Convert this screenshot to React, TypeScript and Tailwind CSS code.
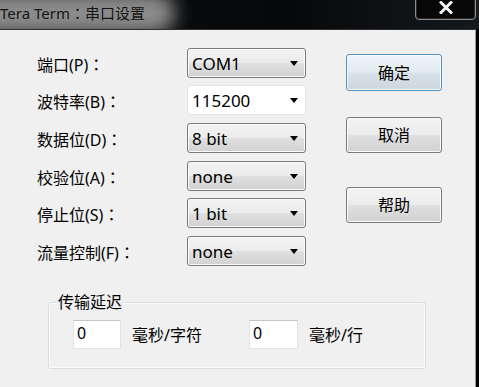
import React from "react";

function Arrow() {
  return (
    <svg width="8" height="5" viewBox="0 0 8 5" className="shrink-0">
      <polygon points="0,0 8,0 4,5" fill="#000" />
    </svg>
  );
}

function Colon() {
  return <span className="font-['Noto_Sans_CJK_TC',sans-serif]">：</span>;
}

function Combo({ value, white = false }: { value: string; white?: boolean }) {
  return (
    <div
      className={
        white
          ? "w-[119px] h-[30px] flex items-center justify-between pl-[4px] pr-[7px] bg-white border border-[#e6e6e6] rounded-[2px]"
          : "w-[119px] h-[30px] flex items-center justify-between pl-[4px] pr-[7px] border border-[#7a7a7a] rounded-[3px] shadow-[inset_0_0_0_1px_#fbfbfb] bg-[linear-gradient(#f3f3f3_0%,#ececec_48%,#dfdfdf_52%,#d2d2d2_100%)]"
      }
    >
      <span className="text-[17px] leading-none text-black">{value}</span>
      <Arrow />
    </div>
  );
}

function Btn({ label, primary = false, h }: { label: string; primary?: boolean; h: string }) {
  return (
    <div
      className={
        (primary
          ? "border-[#4f93c3] bg-[linear-gradient(#edf3f7_0%,#e4ecf1_48%,#d7e1e7_52%,#ccd7de_100%)] "
          : "border-[#7a7a7a] bg-[linear-gradient(#f3f3f3_0%,#ececec_48%,#dfdfdf_52%,#d2d2d2_100%)] ") +
        "w-[96px] flex items-center justify-center border rounded-[3px] shadow-[inset_0_0_0_1px_#fbfbfb] text-[16px] text-black " +
        h
      }
    >
      {label}
    </div>
  );
}

const rows: { label: string; value: string; white?: boolean; mt: string }[] = [
  { label: "端口(P)", value: "COM1", mt: "mt-0" },
  { label: "波特率(B)", value: "115200", white: true, mt: "mt-[7px]" },
  { label: "数据位(D)", value: "8 bit", mt: "mt-[8px]" },
  { label: "校验位(A)", value: "none", mt: "mt-[8px]" },
  { label: "停止位(S)", value: "1 bit", mt: "mt-[7px]" },
  { label: "流量控制(F)", value: "none", mt: "mt-[8px]" },
];

export default function App() {
  return (
    <div className="w-[479px] h-[387px] bg-black overflow-hidden font-['Noto_Sans','Noto_Sans_CJK_SC',sans-serif]">
      {/* title bar */}
      <div className="relative h-[29px] bg-[linear-gradient(90deg,#0d0f11,#07080a_60%,#15191c)] overflow-hidden">
        <div className="absolute left-[-30px] top-[-8px] w-[205px] h-[42px] rounded-full bg-[#8c8c8c] blur-[9px]" />
        <div className="relative pt-[2px] text-[15px] leading-[22px] text-[#151515] whitespace-nowrap">
          Tera Term<Colon />串口设置
        </div>
        <div className="absolute left-[415px] top-[-2px] w-[61px] h-[22px] border border-[#8a8a8a] rounded-b-[4px] bg-[#070707] shadow-[inset_0_0_0_1px_#2a2a2a] flex items-center justify-center">
          <svg width="14" height="13" viewBox="0 0 14 13" className="mt-[-4px]">
            <path d="M2 1.5 L12 11.5 M12 1.5 L2 11.5" stroke="#f4f4f4" strokeWidth="3" strokeLinecap="square" />
          </svg>
        </div>
      </div>
      {/* panel */}
      <div className="w-[476px] h-[358px] bg-[#f0f0f0] border-t border-t-[#2e2e2e] border-r border-r-[#9c9c9c]">
        <div className="flex pl-[37px] pt-[18px]">
          <div className="flex flex-col">
            {rows.map((r) => (
              <div key={r.label} className={"flex items-center h-[30px] " + r.mt}>
                <div className="w-[150px] text-[16px] text-black mt-[2px] whitespace-nowrap">
                  {r.label}
                  <Colon />
                </div>
                <Combo value={r.value} white={r.white} />
              </div>
            ))}
          </div>
          <div className="flex flex-col ml-[40px] pt-[6px]">
            <Btn label="确定" primary h="h-[37px]" />
            <div className="mt-[26px]">
              <Btn label="取消" h="h-[36px]" />
            </div>
            <div className="mt-[34px]">
              <Btn label="帮助" h="h-[36px]" />
            </div>
          </div>
        </div>
        {/* group box */}
        <div className="relative ml-[48px] mt-[36px] w-[378px] h-[67px] border border-[#d5dfe5] rounded-[3px] shadow-[inset_0_0_0_1px_#fafafa]">
          <div className="absolute left-[8px] top-[-12px] px-[1px] bg-[#f0f0f0] text-[16px] leading-[22px] text-black">
            传输延迟
          </div>
          <div className="flex items-center pl-[24px] pt-[17px]">
            <div className="w-[48px] h-[29px] bg-white border border-[#e3e3e3] border-t-[#c4c4c4] pl-[3px] text-[16px] leading-[24px] text-black">
              0
            </div>
            <div className="w-[128px] pl-[11px] text-[16px] text-black">毫秒/字符</div>
            <div className="w-[49px] h-[29px] bg-white border border-[#e3e3e3] border-t-[#c4c4c4] pl-[3px] text-[16px] leading-[24px] text-black">
              0
            </div>
            <div className="pl-[11px] text-[16px] text-black">毫秒/行</div>
          </div>
        </div>
      </div>
    </div>
  );
}
